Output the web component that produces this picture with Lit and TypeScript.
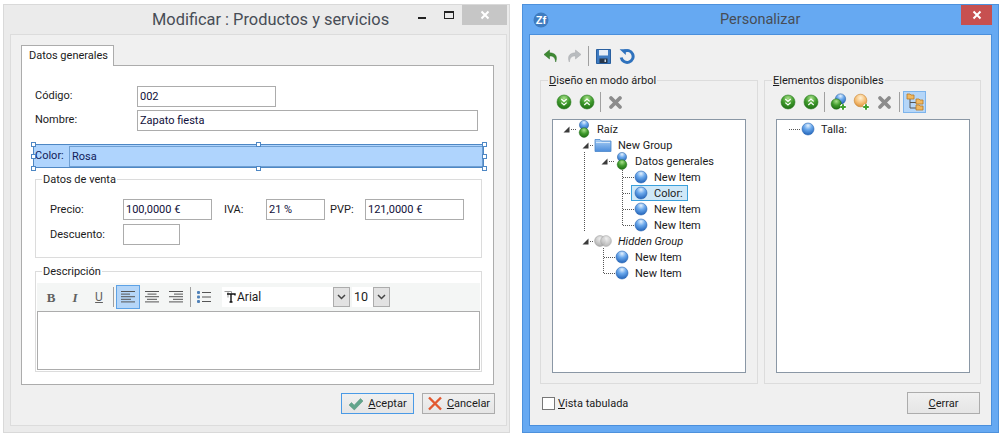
import { LitElement, html, css, svg } from "lit";
import { customElement } from "lit/decorators.js";

const defs = html`<svg width="0" height="0" style="position:absolute">
  <defs>
    <radialGradient id="blue" cx="50%" cy="22%" r="80%">
      <stop offset="0" stop-color="#e4f1fd" /><stop offset=".42" stop-color="#6aa8ec" /><stop offset="1" stop-color="#1f60b6" />
    </radialGradient>
    <radialGradient id="green" cx="50%" cy="24%" r="80%">
      <stop offset="0" stop-color="#a8e08a" /><stop offset=".5" stop-color="#3f9a2c" /><stop offset="1" stop-color="#1c6a12" />
    </radialGradient>
    <radialGradient id="orange" cx="50%" cy="30%" r="75%">
      <stop offset="0" stop-color="#fff2d6" /><stop offset=".55" stop-color="#f5bd74" /><stop offset="1" stop-color="#d68a35" />
    </radialGradient>
    <radialGradient id="grey" cx="50%" cy="30%" r="75%">
      <stop offset="0" stop-color="#eeeeee" /><stop offset="1" stop-color="#a8a8a8" />
    </radialGradient>
    <linearGradient id="folder" x1="0" y1="0" x2="0" y2="1">
      <stop offset="0" stop-color="#a9cff5" /><stop offset="1" stop-color="#4c8ddb" />
    </linearGradient>
  </defs>
</svg>`;

const orb = html`<svg class="i" width="14" height="14" viewBox="0 0 14 14"><circle cx="7" cy="7" r="6" fill="url(#blue)" stroke="#2a66b4" stroke-width=".6" /></svg>`;
const stack = html`<svg class="i" width="14" height="18" viewBox="0 0 14 18" style="margin:-2px 0">
  <ellipse cx="7" cy="5" rx="4.6" ry="4.6" fill="url(#blue)" stroke="#2a5f9e" stroke-width=".5" />
  <ellipse cx="7" cy="12.6" rx="4.8" ry="4.8" fill="url(#green)" stroke="#1d6a14" stroke-width=".5" />
</svg>`;
const folder = html`<svg class="i" width="18" height="14" viewBox="0 0 18 14" style="margin:0 0 0 -2px">
  <path d="M1 1.500h5l1.500 1.500H17v10.500H1z" fill="url(#folder)" stroke="#4a86c9" stroke-width=".8" />
  <path d="M2 4.500h14" stroke="#d4e7fa" stroke-width="1" />
</svg>`;
const ghost = html`<svg class="i" width="18" height="14" viewBox="0 0 18 14" style="margin:0 0 0 -2px">
  <circle cx="6" cy="7" r="5.4" fill="url(#grey)" stroke="#a0a0a0" stroke-width=".6" />
  <circle cx="12" cy="7" r="5.4" fill="url(#grey)" stroke="#a0a0a0" stroke-width=".6" opacity=".85" />
</svg>`;
const arrow = html`<svg class="arrow" width="7" height="7" viewBox="0 0 7 7"><path d="M6.500 .5v6H.5z" fill="#3b3b3b" /></svg>`;

const chevrons = (up: boolean) => html`<svg width="16" height="16" viewBox="0 0 16 16">
  <circle cx="8" cy="8" r="7" fill="url(#green)" stroke="#2a7d20" stroke-width=".6" />
  <path d=${up ? "M5.300 7.400 8 5l2.700 2.400M5.300 11 8 8.600l2.700 2.400" : "M5.300 5 8 7.400 10.700 5M5.300 8.600 8 11l2.700-2.400"} fill="none" stroke="#fff" stroke-width="1.200" />
</svg>`;
const greyX = html`<svg width="15" height="15" viewBox="0 0 15 15"><path d="M3 3 12 12M12 3 3 12" stroke="#8c8c8c" stroke-width="3.800" stroke-linecap="round" /></svg>`;
const plus = svg`<path d="M13 11v6M10 14h6" stroke="#fff" stroke-width="3.600" /><path d="M13 11.200v5.600M10.200 14h5.600" stroke="#3fa02e" stroke-width="2" />`;
const addGroup = html`<svg width="18" height="18" viewBox="0 0 18 18">
  <circle cx="10.500" cy="6" r="5.200" fill="url(#blue)" stroke="#2a5f9e" stroke-width=".5" />
  <circle cx="6.300" cy="11" r="5.200" fill="url(#green)" stroke="#1d6a14" stroke-width=".5" />${plus}
</svg>`;
const addItem = html`<svg width="18" height="18" viewBox="0 0 18 18">
  <circle cx="7.500" cy="7.500" r="6.300" fill="url(#orange)" stroke="#c9842f" stroke-width=".6" />${plus}
</svg>`;
const treeIcon = html`<svg width="18" height="18" viewBox="0 0 18 18">
  <path d="M4 5v10h6M4 9.500h6" fill="none" stroke="#555" stroke-width="1" />
  <path d="M1 1h3l1 1h3v4H1zM10 6h3l1 1h3v4h-7zM10 12h3l1 1h3v4h-7z" fill="#f0b860" stroke="#b87a25" stroke-width=".8" />
</svg>`;

const undo = html`<svg width="16" height="14" viewBox="0 0 16 14"><path d="M6.500 1 1 5.500 6.500 10V7c3.500-.2 5.500 1 6.200 6 1.600-4.500 1-9-6.200-9.200z" fill="#3f8a34" stroke="#2c6f24" stroke-width=".5" /></svg>`;
const redo = html`<svg width="16" height="14" viewBox="0 0 16 14"><path d="M9.500 1 15 5.500 9.500 10V7C6 6.800 4 8 3.300 13 1.700 8.500 2.300 4 9.500 3.800z" fill="#b9bcbf" stroke="#a6a9ac" stroke-width=".5" /></svg>`;
const save = html`<svg width="15" height="15" viewBox="0 0 15 15"><path d="M.5.5h14v14H.5z" fill="#3f7cc2" stroke="#295f9f" /><path d="M3 1h9v5.500H3z" fill="#e6eef7" /><path d="M3.500 9.500h8V14h-8z" fill="#27364a" /><path d="M8.500 10.500h1.500V13H8.500z" fill="#cfd8e2" /></svg>`;
const refresh = html`<svg width="16" height="16" viewBox="0 0 16 16"><path d="M4.800 3.400A6 6 0 1 1 2.200 9.500" fill="none" stroke="#2f72bd" stroke-width="3" /><path d="M.6 1.200h6.200V7z" fill="#2f72bd" /></svg>`;
const check = html`<svg width="16" height="14" viewBox="0 0 16 14"><path d="M1 8 3.500 5.500 6.200 8.200 12.500 1.500 15 4 6.300 13z" fill="#62a58c" stroke="#4f8f78" stroke-width=".5" /></svg>`;
const cross = html`<svg width="16" height="15" viewBox="0 0 16 15"><path d="M2 1.500 14 13.500M14 1.500 2 13.500" stroke="#e2582f" stroke-width="2.400" /></svg>`;
const closeX = html`<svg width="10" height="10" viewBox="0 0 10 10"><path d="M1.500 1.500l7 7M8.500 1.500l-7 7" stroke="#fff" stroke-width="2" /></svg>`;
const align = (k: string) => {
  const ws = [14, 9, 14, 10, 14];
  return html`<svg width="18" height="14" viewBox="0 0 18 14">${ws.map((w, i) => {
    const x = k === "left" ? 2 : k === "center" ? (18 - w) / 2 : 16 - w;
    return svg`<rect x=${x} y=${1 + i * 2.6} width=${w} height="1" fill="#555" />`;
  })}</svg>`;
};
const list = html`<svg width="16" height="14" viewBox="0 0 16 14">
  <rect x="1" y="1" width="3" height="3" rx="1" fill="#4f81b8" /><rect x="1" y="5.500" width="3" height="3" rx="1" fill="#4f81b8" /><rect x="1" y="10" width="3" height="3" rx="1" fill="#4f81b8" />
  <path d="M6 2.500h9M6 7h9M6 11.500h9" stroke="#555" />
</svg>`;
const fontIcon = html`<svg class="ft" width="12" height="12" viewBox="0 0 12 12">
  <path d="M.5.500h7v2M4 .500v6" fill="none" stroke="#9a9a9a" />
  <path d="M3 3h8v1.500M7 3v8M5.500 11h3" fill="none" stroke="#111" stroke-width="1.400" />
</svg>`;
const dropGlyph = html`<svg width="9" height="6" viewBox="0 0 9 6"><path d="M1 1l3.500 3.500L8 1" fill="none" stroke="#444" stroke-width="1.500" /></svg>`;

type Row = { p: number; kind: any; text: string; tog?: boolean; sel?: boolean; it?: boolean };
const rows: Row[] = [
  { p: 6, kind: stack, text: "Raíz", tog: true },
  { p: 25, kind: folder, text: "New Group", tog: true },
  { p: 44, kind: stack, text: "Datos generales", tog: true },
  { p: 63, kind: orb, text: "New Item" },
  { p: 63, kind: orb, text: "Color:", sel: true },
  { p: 63, kind: orb, text: "New Item" },
  { p: 63, kind: orb, text: "New Item" },
  { p: 25, kind: ghost, text: "Hidden Group", tog: true, it: true },
  { p: 44, kind: orb, text: "New Item" },
  { p: 44, kind: orb, text: "New Item" },
];

@customElement("app-root")
export class AppRoot extends LitElement {
  static styles = css`
    :host {
      display: flex;
      width: 1001px;
      height: 437px;
      padding: 4px 0 0 3px;
      box-sizing: border-box;
      background: #fff;
      gap: 12px;
      font: 11px/16px Roboto, sans-serif;
      color: #1b1b1b;
      overflow: hidden;
    }
    * { box-sizing: border-box; }
    .win { height: 429px; display: flex; flex-direction: column; }
    .w1 { width: 507px; background: #ebebeb; border: 1px solid #d9d9d9; padding: 0 2px 6px 6px; }
    .w2 { width: 477px; background: #66a9f2; border: 1px solid #4d91dc; padding: 0 6px 6px 6px; }
    .bar { height: 29px; display: flex; flex: none; align-items: flex-start; }
    .title { font-size: 16.4px; line-height: 20px; color: #474d56; margin-top: 5px; white-space: nowrap; }
    .w1 .title { margin-left: 142px; }
    .w2 .title { margin-left: 191px; font-size: 14.500px; }
    .ctl { display: flex; align-items: flex-start; margin-left: auto; }
    .min { width: 8px; height: 2px; background: #222; margin: 12px 18px 0 0; }
    .max { width: 10px; height: 8px; border: 1px solid #222; border-top-width: 2px; margin: 6px 8px 0 0; }
    .close { width: 45px; height: 20px; background: #c6c6c6 radial-gradient(#d6d6d6 .6px, transparent .7px) 0 0 / 4px 4px; display: flex; align-items: center; justify-content: center; }
    .close.red { width: 31px; background: #c75050; }
    .logo { position: absolute; }
    .body { flex: 1; background: #f0f0f0; border: 1px solid #dcdcdc; padding: 10px 11px 0 10px; display: flex; flex-direction: column; }
    .w2 .body { border-color: #4a8fdc; padding: 0 11px 0 10px; }
    .tab { position: relative; z-index: 1; width: 93px; height: 21px; background: #fff; border: 1px solid #acacac; border-bottom: 0; padding: 2px 0 0 7px; line-height: 16px; white-space: nowrap; }
    .panel { width: 473px; height: 320px; margin-top: -1px; background: #fff; border: 1px solid #acacac; padding: 20px 11px 0 13px; display: flex; flex-direction: column; }
    .row { display: flex; align-items: center; height: 21px; flex: none; }
    .row + .row { margin-top: 3px; }
    .lab { flex: none; }
    .up { margin-top: -2px; }
    .l102 { width: 102px; }
    .input { flex: none; height: 21px; border: 1px solid #acacac; background: #fff; padding-left: 2px; line-height: 19px; color: #10103a; }
    .selrow { position: relative; flex: none; display: flex; margin: 13px 0 0 -2px; width: 451px; height: 24px; background: #afd4fd; border: 1px solid #4e87c4; padding-left: 1px; align-items: center; color: #10205a; }
    .selrow .input { background: transparent; border-color: #6f9fd2; margin-left: auto; width: 414px; color: #10205a; }
    .h { position: absolute; width: 5px; height: 5px; background: #fff; border: 1px solid #4e87c4; }
    .group { border: 1px solid #dcdcdc; flex: none; }
    .legend { width: fit-content; height: 16px; margin: -9px 0 0 6px; padding: 0 1px; background: #fff; line-height: 18px; }
    .g1 { width: 447px; height: 79px; margin-top: 11px; }
    .g1 .pad { display: flex; flex-direction: column; padding: 12px 0 0 14px; }
    .g1 .row + .row { margin-top: 4px; }
    .g2 { width: 447px; height: 101px; margin-top: 13px; padding: 0 1px; }
    .g2 .legend { margin-left: 5px; }
    .tb { margin-top: 4px; height: 28px; background: #f4f6f5; display: flex; align-items: center; padding-left: 2px; }
    .bt { width: 24px; height: 24px; flex: none; display: flex; align-items: center; justify-content: center; font: 700 13px/1 "Liberation Serif", serif; color: #606060; }
    .bt.on { background: #b5d6f8; border: 1px solid #5da2e6; }
    .bi { font-style: italic; }
    .bu { text-decoration: underline; font: 400 12px/1 Roboto, sans-serif; }
    .sp { width: 1px; height: 20px; background: #a0a0a0; flex: none; margin: 0 2px; }
    .sel { height: 20px; background: #fff; display: flex; align-items: center; flex: none; padding-left: 2px; font-size: 12px; }
    .ft { margin-right: 1px; }
    .dd { width: 17px; height: 20px; flex: none; background: #e2e2e2; border: 1px solid #acacac; display: flex; align-items: center; justify-content: center; }
    .editor { height: 59px; border: 1px solid #acacac; background: #fff; }
    .acts { display: flex; justify-content: flex-end; gap: 8px; margin-top: 8px; }
    .btn { width: 73px; height: 21px; flex: none; display: flex; align-items: center; justify-content: center; gap: 4px; border: 1px solid #acacac; background: linear-gradient(#f0f0f0, #e5e5e5); }
    .btn.def { border-color: #4a9ae6; }
    .main { display: flex; align-items: center; height: 20px; margin: 11px 0 14px 0; padding-left: 0; }
    .cell { width: 23px; height: 20px; flex: none; display: flex; align-items: center; justify-content: center; }
    .cols { display: flex; gap: 6px; flex: none; }
    .g3 { width: 218px; height: 304px; background: none; }
    .g4 { width: 217px; height: 304px; }
    .g3 .legend, .g4 .legend { background: #f0f0f0; margin-left: 7px; }
    .tools { display: flex; align-items: center; height: 22px; margin: 3px 0 0 11px; }
    .tools .sp { margin: 0 3px 0 2px; }
    .cell.on { height: 22px; background: #b5d6f8; border: 1px solid #7db4ec; margin-left: 0; }
    .tree { position: relative; width: 194px; height: 254px; margin: 6px 0 0 11px; background: #fff; border: 1px solid #8a97a5; padding-top: 1px; }
    .lines { position: absolute; left: -1px; top: -1px; }
    .tr { position: relative; display: flex; height: 16px; align-items: center; white-space: nowrap; }
    .tog { width: 18px; flex: none; display: flex; padding-left: 4px; align-items: center; }
    .it { display: flex; align-items: center; height: 16px; gap: 6px; }
    .it > span { padding-top: 2px; }
    .it.s { margin-left: -3px; padding: 0 5px 0 3px; background: #cfe8f8; box-shadow: inset 0 0 0 1px #3aa0dc; }
    .em { font-style: italic; }
    .foot { display: flex; justify-content: space-between; align-items: center; margin-top: 8px; padding-left: 2px; }
    .ck { display: flex; align-items: center; gap: 3px; }
    .ck > span:last-child { padding-top: 2px; }
    .box { width: 13px; height: 13px; background: #fff; border: 1px solid #777; }
    .foot .btn { height: 22px; padding-top: 2px; }
  `;

  handle(x: string, y: string) {
    return html`<span class="h" style="left:${x};top:${y}"></span>`;
  }

  tree() {
    return html`<svg class="lines" width="194" height="254" viewBox="552 119 194 254" fill="none" stroke="#555" stroke-dasharray="1 1">
      <path d="M571 129.500h5M590 145.500h4M609 161.500h5M584.500 152v80M590 241.500h4" />
      <path d="M622.500 168v57.500M623 177.500h11M623 193.500h8M623 209.500h11M623 225.500h11" />
      <path d="M603.500 248v25.500M604 257.500h11M604 273.500h11" />
    </svg>`;
  }

  render() {
    return html`${defs}
      <section class="win w1">
        <div class="bar">
          <div class="title">Modificar : Productos y servicios</div>
          <div class="ctl"><span class="min"></span><span class="max"></span><span class="close">${closeX}</span></div>
        </div>
        <div class="body">
          <div class="tab">Datos generales</div>
          <div class="panel">
            <div class="row"><span class="lab l102 up">Código:</span><span class="input" style="width:139px">002</span></div>
            <div class="row"><span class="lab l102 up">Nombre:</span><span class="input" style="width:341px">Zapato fiesta</span></div>
            <div class="selrow">
              <span class="lab">Color:</span><span class="input">Rosa</span>
              ${this.handle("-3px", "-3px")}${this.handle("222px", "-3px")}${this.handle("448px", "-3px")}
              ${this.handle("-3px", "9px")}${this.handle("448px", "9px")}
              ${this.handle("-3px", "21px")}${this.handle("222px", "21px")}${this.handle("448px", "21px")}
            </div>
            <div class="group g1">
              <div class="legend">Datos de venta</div>
              <div class="pad">
                <div class="row">
                  <span class="lab" style="width:73px">Precio:</span><span class="input" style="width:89px">100,0000 €</span>
                  <span class="lab" style="width:42px;margin-left:12px">IVA:</span><span class="input" style="width:59px">21 %</span>
                  <span class="lab" style="width:35px;margin-left:5px">PVP:</span><span class="input" style="width:99px">121,0000 €</span>
                </div>
                <div class="row"><span class="lab" style="width:73px">Descuento:</span><span class="input" style="width:57px"></span></div>
              </div>
            </div>
            <div class="group g2">
              <div class="legend">Descripción</div>
              <div class="tb">
                <span class="bt">B</span><span class="bt bi">I</span><span class="bt bu">U</span>
                <span class="sp"></span>
                <span class="bt on">${align("left")}</span><span class="bt">${align("center")}</span><span class="bt">${align("right")}</span>
                <span class="sp" style="margin-right:1px"></span>
                <span class="bt">${list}</span>
                <span class="sel" style="width:111px;margin-left:6px">${fontIcon}Arial</span><span class="dd">${dropGlyph}</span>
                <span class="sel" style="width:21px;margin-left:2px;font-size:12.500px">10</span><span class="dd">${dropGlyph}</span>
              </div>
              <div class="editor"></div>
            </div>
          </div>
          <div class="acts">
            <span class="btn def">${check}<span><u>A</u>ceptar</span></span>
            <span class="btn">${cross}<span><u>C</u>ancelar</span></span>
          </div>
        </div>
      </section>
      <section class="win w2">
        <div class="bar" style="position:relative">
          <svg class="logo" style="left:4px;top:7px" width="16" height="16" viewBox="0 0 16 16">
            <circle cx="8" cy="8" r="7.500" fill="#3f7cc0" />
            <text x="8" y="12" text-anchor="middle" font-family="Liberation Sans" font-weight="700" font-size="11" fill="#fff">Zf</text>
          </svg>
          <div class="title">Personalizar</div>
          <div class="ctl"><span class="close red">${closeX}</span></div>
        </div>
        <div class="body">
          <div class="main">
            <span class="cell" style="margin-left:-1px">${undo}</span><span class="cell">${redo}</span>
            <span class="sp" style="margin:0 3px"></span>
            <span class="cell">${save}</span><span class="cell">${refresh}</span>
          </div>
          <div class="cols">
            <div class="group g3">
              <div class="legend"><u>D</u>iseño en modo árbol</div>
              <div class="tools">
                <span class="cell">${chevrons(false)}</span><span class="cell">${chevrons(true)}</span><span class="sp"></span><span class="cell">${greyX}</span>
              </div>
              <div class="tree">
                ${this.tree()}
                ${rows.map(
                  (r) => html`<div class="tr" style="padding-left:${r.p}px">
                    <span class="tog">${r.tog ? arrow : ""}</span>
                    <span class="it ${r.sel ? "s" : ""}">${r.kind}<span class=${r.it ? "em" : ""}>${r.text}</span></span>
                  </div>`,
                )}
              </div>
            </div>
            <div class="group g4">
              <div class="legend"><u>E</u>lementos disponibles</div>
              <div class="tools">
                <span class="cell">${chevrons(false)}</span><span class="cell">${chevrons(true)}</span><span class="sp" style="margin:0 2px"></span>
                <span class="cell">${addGroup}</span><span class="cell">${addItem}</span><span class="cell">${greyX}</span>
                <span class="sp" style="margin:0 3px"></span>
                <span class="cell on">${treeIcon}</span>
              </div>
              <div class="tree">
                <svg class="lines" width="30" height="20" viewBox="776 119 30 20" fill="none" stroke="#555" stroke-dasharray="1 1"><path d="M789 129.500h12" /></svg>
                <div class="tr" style="padding-left:6px"><span class="tog"></span><span class="it">${orb}<span>Talla:</span></span></div>
              </div>
            </div>
          </div>
          <div class="foot">
            <span class="ck"><span class="box"></span><span><u>V</u>ista tabulada</span></span>
            <span class="btn"><span><u>C</u>errar</span></span>
          </div>
        </div>
      </section>`;
  }
}
